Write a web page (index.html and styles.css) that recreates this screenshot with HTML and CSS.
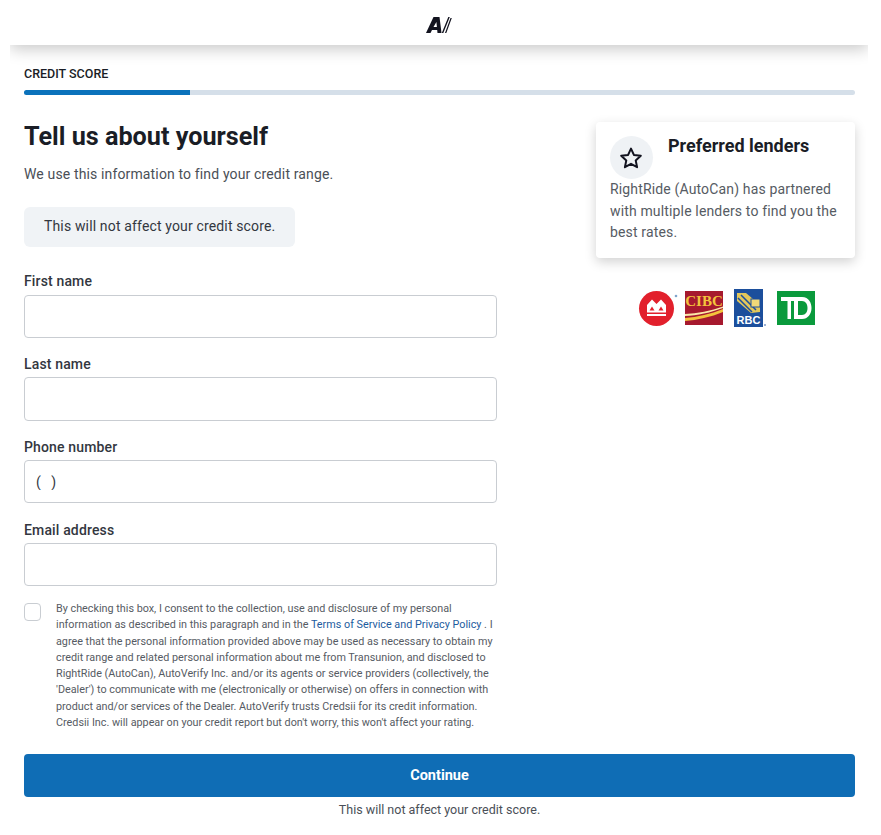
FILE: index.html
```html
<!DOCTYPE html>
<html lang="en">
<head>
    <meta charset="UTF-8">
    <title>Credit Score</title>
    <link rel="stylesheet" href="styles.css">
</head>
<body>
    <header class="topbar">
        <svg class="logo" width="26" height="16" viewBox="0 0 26 16">
            <path fill-rule="evenodd" d="M0 16 L7.500 0 H13.500 L15.500 16 H11.500 L11.200 13 H6 L4.500 16 Z M7.500 10 H10.900 L10.400 5 Z" fill="#12131f"/>
            <path d="M15.800 16 L22.300 0 H23.800 L17.300 16 Z M19 16 L24.500 1 H25.800 L20.300 16 Z" fill="#12131f"/>
        </svg>
    </header>

    <div class="container">
        <div class="progress-title">CREDIT SCORE</div>
        <div class="progress"><div class="progress-fill"></div></div>

        <div class="columns">
            <main class="form-col">
                <h1>Tell us about yourself</h1>
                <p class="intro">We use this information to find your credit range.</p>
                <div class="notice">This will not affect your credit score.</div>

                <div class="field">
                    <label>First name</label>
                    <input type="text">
                </div>
                <div class="field">
                    <label>Last name</label>
                    <input type="text">
                </div>
                <div class="field">
                    <label>Phone number</label>
                    <input type="text" value="(   )">
                </div>
                <div class="field">
                    <label>Email address</label>
                    <input type="text">
                </div>

                <div class="consent">
                    <span class="checkbox"></span>
                    <p>By checking this box, I consent to the collection, use and disclosure of my personal information as described in this paragraph and in the <a href="#">Terms of Service and Privacy Policy</a> . I agree that the personal information provided above may be used as necessary to obtain my credit range and related personal information about me from Transunion, and disclosed to RightRide (AutoCan), AutoVerify Inc. and/or its agents or service providers (collectively, the 'Dealer') to communicate with me (electronically or otherwise) on offers in connection with product and/or services of the Dealer. AutoVerify trusts Credsii for its credit information. Credsii Inc. will appear on your credit report but don't worry, this won't affect your rating.</p>
                </div>
            </main>

            <aside class="side-col">
                <div class="card">
                    <div class="card-head">
                        <span class="star-circle">
                            <svg class="star" width="24" height="24" viewBox="0 0 24 24" fill="none" stroke="#12131f" stroke-width="2" stroke-linejoin="round">
                                <path d="M12 2.600 L14.900 8.900 L21.800 9.700 L16.700 14.400 L18.100 21.200 L12 17.800 L5.900 21.200 L7.300 14.400 L2.200 9.700 L9.100 8.900 Z"/>
                            </svg>
                        </span>
                        <h2>Preferred lenders</h2>
                    </div>
                    <p>RightRide (AutoCan) has partnered with multiple lenders to find you the best rates.</p>
                </div>

                <div class="lenders">
                    <svg class="lender-bmo" width="35" height="35" viewBox="0 0 35 35">
                        <circle cx="17.500" cy="17.500" r="17.500" fill="#e2202c"/>
                        <path d="M8 25 V14 L13 8.500 L17.500 13 L22 8.500 L27 14 V25 Z" fill="#fff"/>
                        <path d="M10.500 19.500 L13 15.500 L15.500 19.500 Z M19.500 19.500 L22 15.500 L24.500 19.500 Z" fill="#e2202c"/>
                        <rect x="8" y="21.500" width="19" height="1.500" fill="#e2202c"/>
                        <circle cx="37" cy="5" r="1.300" fill="#7fa6cc"/>
                    </svg>
                    <svg width="38" height="34" viewBox="0 0 38 34">
                        <rect width="38" height="34" fill="#a6192e"/>
                        <text x="19" y="15" text-anchor="middle" class="cibc-text">CIBC</text>
                        <path d="M0 27 C12 26 26 23 38 18 V21 C26 26 12 29 0 30 Z" fill="#f3c33c"/>
                        <path d="M0 23 C12 22.500 26 20 38 15.500 V17 C26 21.500 12 24.500 0 25 Z" fill="#fbe7a8"/>
                    </svg>
                    <svg width="32" height="38" viewBox="0 0 32 38">
                        <rect width="29" height="38" fill="#1c4f9c"/>
                        <path d="M3 4 L12 4 L26 16 L26 23 L17 24 L3 12 Z" fill="#e3c75a"/>
                        <path d="M4 9 L18 23 M7 6 L22 21" stroke="#1c4f9c" stroke-width="1.500"/>
                        <rect x="17" y="10" width="9" height="8" fill="#f0d878" stroke="#1c4f9c"/>
                        <text x="14.500" y="35" text-anchor="middle" class="rbc-text">RBC</text>
                        <circle cx="31" cy="36" r="0.800" fill="#1c4f9c"/>
                    </svg>
                    <svg width="38" height="34" viewBox="0 0 38 34">
                        <rect width="38" height="34" fill="#0a9a3c"/>
                        <path fill-rule="evenodd" d="M4 6 H25 C32 6 34.500 12 34.500 17 C34.500 23 31 28 25 28 H17 V10 H14 V28 H10.500 V10 H4 Z M21 10 V24 H25 C28.500 24 30.500 21 30.500 17 C30.500 13 28.500 10 25 10 Z" fill="#fff"/>
                    </svg>
                </div>
            </aside>
        </div>

        <button class="continue">Continue</button>
        <p class="caption">This will not affect your credit score.</p>
    </div>
</body>
</html>
```

FILE: styles.css
```css
body {
    font-family: 'Roboto', sans-serif;
    color: #1a1d26;
    margin: 0;
    background-color: #fff;
}

.topbar {
    height: 45px;
    margin: 0 13px 0 10px;
    display: flex;
    align-items: center;
    justify-content: center;
    background-color: #fff;
    box-shadow: 0 4px 16px rgba(0, 0, 0, 0.22);
    clip-path: inset(0 0 -30px 0);
}

.logo {
    margin-top: 5px;
}

.container {
    padding: 22px 26px 0 24px;
}

.progress-title {
    font-size: 12.5px;
    font-weight: 500;
    line-height: 14px;
    color: #1a1d26;
}

.progress {
    height: 5px;
    margin-top: 9px;
    border-radius: 3px;
    background-color: #d5dfe9;
}

.progress-fill {
    width: 20%;
    height: 5px;
    border-radius: 3px 0 0 3px;
    background-color: #0b72bb;
}

.columns {
    display: flex;
    justify-content: space-between;
}

.form-col {
    width: 473px;
}

h1 {
    margin: 26px 0 0;
    font-size: 25.2px;
    font-weight: 700;
    line-height: 32px;
}

.intro {
    margin: 11px 0 0;
    font-size: 14px;
    line-height: 20px;
    letter-spacing: 0.14px;
    color: #4a4f57;
}

.notice {
    display: inline-block;
    margin-top: 23px;
    padding: 9px 20px 11px;
    font-size: 14px;
    line-height: 20px;
    letter-spacing: 0.15px;
    color: #33373f;
    background-color: #f0f3f6;
    border-radius: 6px;
    vertical-align: top;
}

.field {
    margin-top: 16.6px;
}

.notice + .field {
    margin-top: 24px;
}

.field label {
    display: block;
    font-size: 14px;
    font-weight: 500;
    line-height: 20px;
    letter-spacing: 0.15px;
    color: #33373f;
    margin-bottom: 3px;
}

.notice + .field label {
    margin-bottom: 3.6px;
}

.field input {
    display: block;
    box-sizing: border-box;
    width: 100%;
    height: 43.2px;
    padding: 0 11px;
    font-family: 'Roboto', sans-serif;
    font-size: 14px;
    color: #33373f;
    border: 1px solid #c9cdd2;
    border-radius: 4px;
    background-color: #fff;
}

.consent {
    display: flex;
    gap: 15px;
    margin-top: 15px;
    padding-right: 3px;
}

.checkbox {
    flex: none;
    box-sizing: border-box;
    width: 17px;
    height: 18px;
    margin-top: 2px;
    border: 1px solid #c9cdd2;
    border-radius: 4px;
}

.consent p {
    margin: 0;
    font-size: 10.8px;
    line-height: 16.25px;
    color: #565b63;
}

.consent a {
    color: #1d5c9e;
    text-decoration: none;
}

.side-col {
    width: 259px;
    margin-top: 27px;
}

.card {
    box-sizing: border-box;
    height: 136px;
    padding: 14px 14px 0;
    border-radius: 4px;
    background-color: #fff;
    box-shadow: 0 4px 12px rgba(0, 0, 0, 0.18);
}

.card-head {
    display: flex;
    gap: 15px;
}

.star-circle {
    flex: none;
    width: 43px;
    height: 43px;
    display: flex;
    align-items: center;
    justify-content: center;
    border-radius: 50%;
    background-color: #eff2f5;
}

.star {
    margin-left: -1px;
}

.card h2 {
    margin: 0;
    font-size: 18px;
    font-weight: 700;
    line-height: 20px;
    color: #1a1d26;
}

.card p {
    margin: 0;
    font-size: 14px;
    line-height: 21.5px;
    letter-spacing: 0.15px;
    color: #565b63;
}

.lenders {
    display: flex;
    justify-content: center;
    align-items: center;
    gap: 11px;
    margin-top: 31px;
    margin-left: 3px;
}

.lender-bmo {
    overflow: visible;
}

.cibc-text {
    font-family: 'Liberation Serif', serif;
    font-size: 15px;
    font-weight: 700;
    fill: #f3c33c;
}

.rbc-text {
    font-family: 'Liberation Sans', sans-serif;
    font-size: 11px;
    font-weight: 700;
    fill: #fff;
}

.continue {
    display: block;
    width: 100%;
    height: 43px;
    margin-top: 23px;
    border: none;
    border-radius: 4px;
    font-family: 'Roboto', sans-serif;
    font-size: 14.5px;
    font-weight: 700;
    color: #fff;
    background-color: #0f6db5;
}

.caption {
    margin: 5px 0 0;
    font-size: 12.5px;
    line-height: 16px;
    text-align: center;
    color: #4a4f57;
}
```
